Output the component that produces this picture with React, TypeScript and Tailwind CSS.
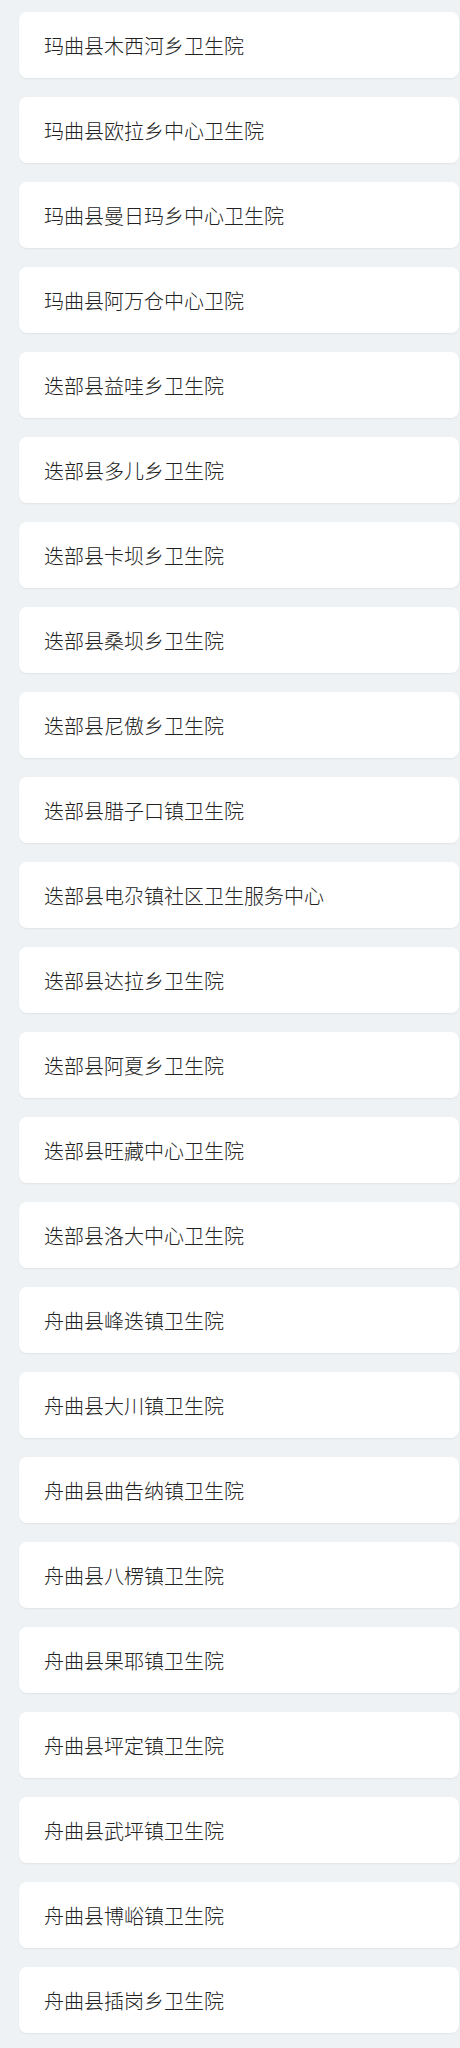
const items = [
  "玛曲县木西河乡卫生院",
  "玛曲县欧拉乡中心卫生院",
  "玛曲县曼日玛乡中心卫生院",
  "玛曲县阿万仓中心卫院",
  "迭部县益哇乡卫生院",
  "迭部县多儿乡卫生院",
  "迭部县卡坝乡卫生院",
  "迭部县桑坝乡卫生院",
  "迭部县尼傲乡卫生院",
  "迭部县腊子口镇卫生院",
  "迭部县电尕镇社区卫生服务中心",
  "迭部县达拉乡卫生院",
  "迭部县阿夏乡卫生院",
  "迭部县旺藏中心卫生院",
  "迭部县洛大中心卫生院",
  "舟曲县峰迭镇卫生院",
  "舟曲县大川镇卫生院",
  "舟曲县曲告纳镇卫生院",
  "舟曲县八楞镇卫生院",
  "舟曲县果耶镇卫生院",
  "舟曲县坪定镇卫生院",
  "舟曲县武坪镇卫生院",
  "舟曲县博峪镇卫生院",
  "舟曲县插岗乡卫生院",
];

export default function App() {
  return (
    <div
      className="min-h-screen bg-[#eef2f5] pt-[12px] pb-[15px]"
      style={{ fontFamily: '"Noto Sans CJK SC", "Noto Sans", sans-serif' }}
    >
      <ul className="flex flex-col gap-[19px] ml-[19px] mr-[1px]">
        {items.map((name) => (
          <li
            key={name}
            className="h-[66px] flex items-center pl-[25px] pt-[1px] bg-white rounded-[8px] shadow-[0_1px_2px_rgba(0,0,0,0.06)] text-[20px] text-[#222] font-light"
          >
            {name}
          </li>
        ))}
      </ul>
    </div>
  );
}
